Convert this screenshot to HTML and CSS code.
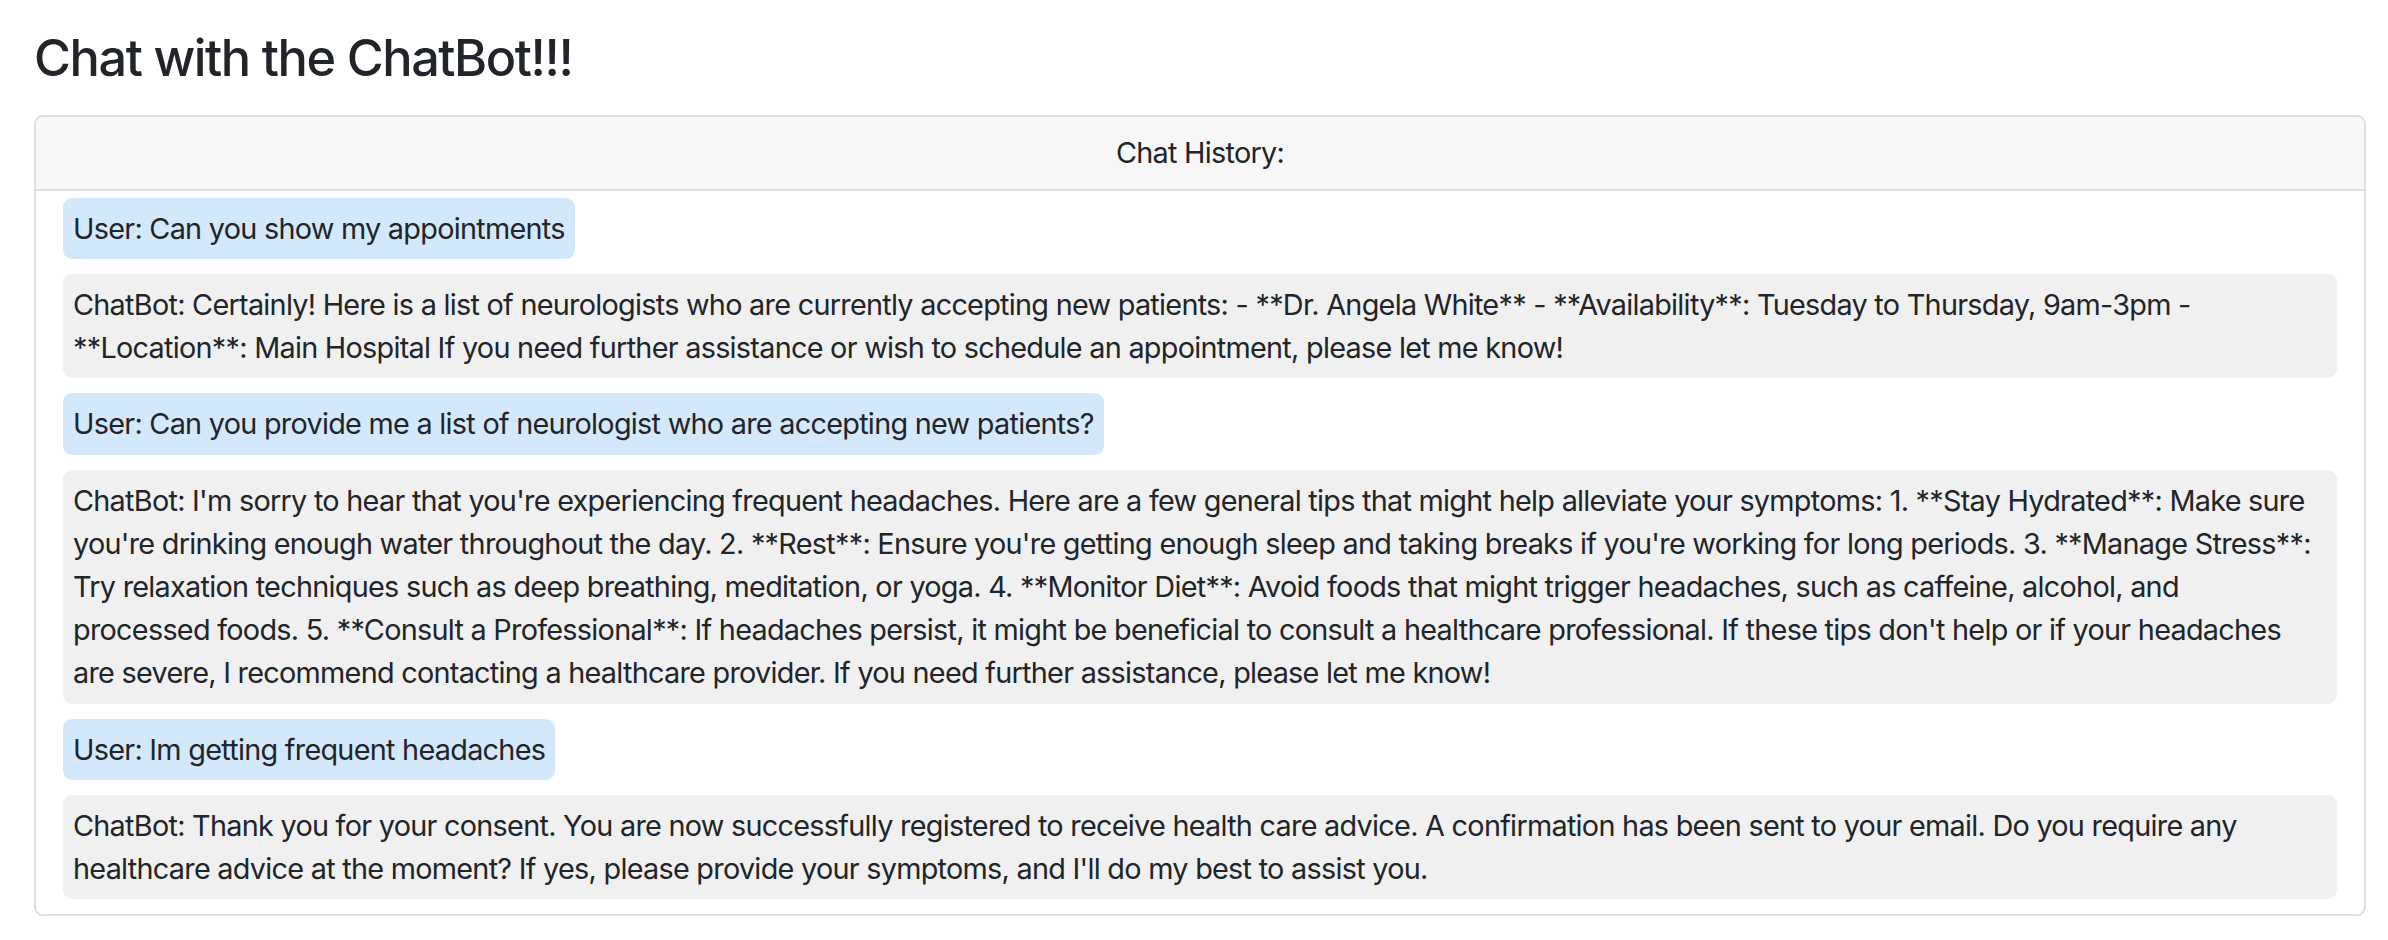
FILE: index.html
```html
<!DOCTYPE html>
<html lang="en">
<head>
<meta charset="utf-8">
<title>Chat with the ChatBot!!!</title>
<link rel="stylesheet" href="styles.css">
</head>
<body>
<div class="page">
  <h1 class="title">Chat with the ChatBot!!!</h1>
  <div class="card">
    <div class="card-header">Chat History:</div>
    <div class="card-body">
      <div class="msg user">User: Can you show my appointments</div>
      <div class="msg bot">ChatBot: Certainly! Here is a list of neurologists who are currently accepting new patients: - **Dr. Angela White** - **Availability**: Tuesday to Thursday, 9am-3pm - **Location**: Main Hospital If you need further assistance or wish to schedule an appointment, please let me know!</div>
      <div class="msg user">User: Can you provide me a list of neurologist who are accepting new patients?</div>
      <div class="msg bot">ChatBot: I'm sorry to hear that you're experiencing frequent headaches. Here are a few general tips that might help alleviate your symptoms: 1. **Stay Hydrated**: Make sure you're drinking enough water throughout the day. 2. **Rest**: Ensure you're getting enough sleep and taking breaks if you're working for long periods. 3. **Manage Stress**: Try relaxation techniques such as deep breathing, meditation, or yoga. 4. **Monitor Diet**: Avoid foods that might trigger headaches, such as caffeine, alcohol, and<br>processed foods. 5. **Consult a Professional**: If headaches persist, it might be beneficial to consult a healthcare professional. If these tips don't help or if your headaches are severe, I recommend contacting a healthcare provider. If you need further assistance, please let me know!</div>
      <div class="msg user">User: Im getting frequent headaches</div>
      <div class="msg bot">ChatBot: Thank you for your consent. You are now successfully registered to receive health care advice. A confirmation has been sent to your email. Do you require any healthcare advice at the moment? If yes, please provide your symptoms, and I'll do my best to assist you.</div>
    </div>
  </div>
</div>
</body>
</html>
```

FILE: styles.css
```css
html, body {
  margin: 0;
  padding: 0;
  background: #ffffff;
}

body {
  font-family: Inter, "Liberation Sans", Arial, sans-serif;
  font-size: 28.8px;
  line-height: 43.2px;
  letter-spacing: -0.025em;
  color: #212529;
}

.page {
  padding: 28px 22px 0 34px;
}

.title {
  margin: 0 0 27px 0;
  font-size: 50.4px;
  font-weight: 500;
  line-height: 1.2;
  letter-spacing: -0.028em;
  color: #212529;
}

.card {
  border: 2px solid #dfdfdf;
  border-radius: 9px;
  overflow: hidden;
  background: #ffffff;
}

.card-header {
  background: #f7f7f7;
  border-bottom: 2px solid #dfdfdf;
  padding: 14px 28px;
  text-align: center;
}

.card-body {
  display: flex;
  flex-direction: column;
  align-items: flex-start;
  gap: 15px;
  padding: 7px 27px 15px 27px;
}

.msg {
  padding: 9px 10px;
  border-radius: 9px;
}

.user {
  background: #d4e8fc;
}

.bot {
  background: #f0f0f0;
  align-self: stretch;
}
```
